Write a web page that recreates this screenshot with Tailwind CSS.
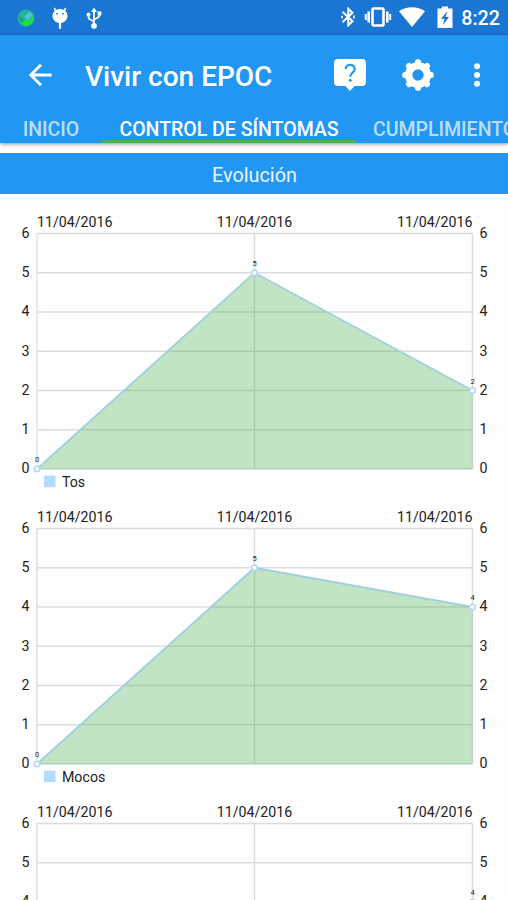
<!DOCTYPE html>
<html lang="es">
<head>
  <meta charset="UTF-8">
  <title>Vivir con EPOC | Control de síntomas</title>
  <script src="https://cdn.jsdelivr.net/npm/@tailwindcss/browser@4"></script>
</head>
<body class="w-[508px] h-[900px] overflow-hidden bg-[#fefefe] font-['Roboto',sans-serif]">
  <!-- Status bar -->
  <div class="h-[35px] bg-[#1976d2] flex items-center justify-between pl-[17px] pr-2 text-white">
    <div class="flex items-center">
      <svg class="w-[18px] h-[18px]" viewBox="0 0 18 18">
        <circle cx="9" cy="9" r="8.5" fill="#27b39a"/>
        <path d="M2 4 7 8l5-5 4 3-5 5z" fill="#4dc4d8"/>
        <path d="M4 14l4-3 4 1 4-5c2 5-2 10-7 10-2 0-4-1-5-3z" fill="#17e43a"/>
        <path d="M1 7l4 2 3 3-4 1z" fill="#16a67c"/>
      </svg>
      <svg class="w-[18px] h-[22px] ml-4" viewBox="0 0 18 22" fill="#fff">
        <path d="M3.2 1 5 4M14.8 1 13 4" stroke="#fff" stroke-width="1.5"/>
        <path d="M9 2c4.300 0 7.500 3 7.500 6.800 0 4-3 7.200-7.500 7.200s-7.500-3.200-7.500-7.200c0-3.800 3.200-6.800 7.500-6.800z"/>
        <rect x="7.900" y="15" width="2.200" height="7" rx="1"/>
        <circle cx="6" cy="6.800" r=".9" fill="#1976d2"/>
        <circle cx="12" cy="6.800" r=".9" fill="#1976d2"/>
      </svg>
      <svg class="w-[16px] h-[22px] ml-[17px]" viewBox="0 0 16 22" fill="none" stroke="#fff" stroke-width="1.800">
        <path d="M8 18V4M8 15.500C8 12.500 2.500 14 2.500 10V8M8 13.500c0-3 5.500-1.500 5.500-5.500V6"/>
        <path d="M8 .5 5 5h6z" fill="#fff" stroke="none"/>
        <circle cx="8" cy="18.800" r="2.900" fill="#fff" stroke="none"/>
        <circle cx="2.500" cy="7.500" r="2" fill="#fff" stroke="none"/>
        <rect x="11.600" y="4.500" width="3.800" height="3.800" fill="#fff" stroke="none"/>
      </svg>
    </div>
    <div class="flex items-center">
      <svg class="w-[14px] h-[20px]" viewBox="0 0 14 20" fill="none" stroke="#fff" stroke-width="2">
        <path d="M1.500 4.800 11.500 14.200 7.300 18.200V1.800l4.200 4L1.500 15.200"/>
        <path d="M1 8.800v2.400M13 8.500v3" stroke-width="1.600"/>
      </svg>
      <svg class="w-[28px] h-[20px] ml-[9px]" viewBox="0 0 28 20" fill="none" stroke="#fff">
        <rect x="8.500" y="1.500" width="11" height="17" rx="1" stroke-width="2.600"/>
        <path d="M4.700 4.500v11M23.300 4.500v11" stroke-width="2.600"/>
        <path d="M1.800 7v6M26.200 7v6" stroke-width="2"/>
      </svg>
      <svg class="w-[26px] h-[20px] ml-[7px]" viewBox="0 0 26 20" fill="#fff">
        <path d="M0 4.200C7.500-1 18.500-1 26 4.200L13 20z"/>
      </svg>
      <svg class="w-[16px] h-[22px] ml-[12px]" viewBox="0 0 16 22">
        <path d="M5 .5h6v2h4.500V22H.5V2.500H5z" fill="#fff"/>
        <path d="M10.500 5 4 12.700h3.500L6 19l6-8H8.500z" fill="#1976d2"/>
      </svg>
      <span class="ml-[8px] text-[19.700px] leading-none font-medium pt-[3px]">8:22</span>
    </div>
  </div>

  <!-- App bar and tabs -->
  <header class="relative z-10 h-[107.500px] bg-[#2196f3] text-white shadow-[0_1px_4px_rgba(0,0,0,0.45)]">
    <div class="h-[80px] flex items-center pl-[28px]">
      <svg class="w-[24px] h-[24px]" viewBox="0 0 24 24" fill="none" stroke="#fff" stroke-width="2.800">
        <path d="M23.500 12H3M13 1.800 2.800 12 13 22.200"/>
      </svg>
      <h1 class="ml-[33px] w-[248px] text-[28px] leading-none font-medium whitespace-nowrap pt-[4px]">Vivir con EPOC</h1>
      <svg class="w-[34px] h-[34px]" viewBox="0 0 34 34">
        <path d="M5 1h24c2.500 0 4 1.500 4 4v19c0 2.500-1.500 4-4 4h-7.500L17 33l-4.500-5H5c-2.500 0-4-1.500-4-4V5c0-2.500 1.500-4 4-4z" fill="#fff"/>
        <path d="M12.700 11c0-5.500 9-5.500 9 0 0 3.800-4.500 4-4.500 7.800" fill="none" stroke="#2196f3" stroke-width="2.200"/>
        <circle cx="17.200" cy="22.200" r="1.500" fill="#2196f3"/>
      </svg>
      <svg class="w-[34px] h-[34px] ml-[34px]" viewBox="0 0 34 34">
        <g fill="#fff">
          <circle cx="17" cy="17" r="13"/>
          <rect x="14" y="1.300" width="6" height="31.400" rx="2.500"/>
          <rect x="14" y="1.300" width="6" height="31.400" rx="2.500" transform="rotate(45 17 17)"/>
          <rect x="14" y="1.300" width="6" height="31.400" rx="2.500" transform="rotate(90 17 17)"/>
          <rect x="14" y="1.300" width="6" height="31.400" rx="2.500" transform="rotate(135 17 17)"/>
        </g>
        <circle cx="17" cy="17" r="5.700" fill="#2196f3"/>
      </svg>
      <svg class="w-[8px] h-[26px] ml-[38px]" viewBox="0 0 8 26" fill="#fff">
        <circle cx="4" cy="4.200" r="3"/>
        <circle cx="4" cy="13" r="3"/>
        <circle cx="4" cy="21.800" r="3"/>
      </svg>
    </div>
    <nav class="h-[27.500px] flex text-[19.500px] leading-[29px] font-medium whitespace-nowrap overflow-hidden">
      <a class="w-[102px] shrink-0 text-center text-white/70">INICIO</a>
      <a class="w-[254px] h-[27.500px] shrink-0 text-center border-b-3 border-[#4caf50]">CONTROL DE SÍNTOMAS</a>
      <a class="pl-[17px] shrink-0 text-white/70">CUMPLIMIENTO</a>
    </nav>
  </header>

  <h2 class="mt-[10.500px] h-[40.500px] bg-[#2196f3] text-center text-[19.800px] leading-[45px] text-white/90 pl-px">Evolución</h2>

  <main id="charts" class="h-[706.500px] overflow-hidden"></main>

  <script>
    const charts = [
      { name: 'Tos', values: [0, 5, 2], axis: '#d9e6fb' },
      { name: 'Mocos', values: [0, 5, 4], axis: '#dcdce0' },
      { name: 'Flemas', values: [0, 3, 4], axis: '#dcdce0' }
    ];
    const date = '11/04/2016';
    const xs = [37, 254.5, 472.5];
    const gridTop = 39.5, step = 39.25;
    const yOf = v => gridTop + (6 - v) * step;

    function drawChart(c) {
      let grid = '', points = '';
      for (let v = 0; v <= 6; v++) {
        const y = yOf(v);
        grid += `<path d="M37 ${y}H472.5" stroke="#dcdcdc" stroke-width="1.5"/>
          <text x="29.5" y="${y + 4.5}" text-anchor="end">${v}</text>
          <text x="479.5" y="${y + 4.5}">${v}</text>`;
      }
      const line = c.values.map((v, i) => `${xs[i]},${yOf(v)}`).join(' ');
      c.values.forEach((v, i) => {
        points += `<circle cx="${xs[i]}" cy="${yOf(v)}" r="2.8" fill="#fff" stroke="#b5d6fa" stroke-width="1.5"/>
          <text x="${xs[i]}" y="${yOf(v) - 6.5}" font-size="7.5" text-anchor="middle">${v}</text>`;
      });
      return `<svg class="block w-[508px] h-[295.300px]" viewBox="0 0 508 295.3" font-size="14.2" fill="#222">
        ${grid}
        <path d="M254.5 ${gridTop}V${yOf(0)}M472.5 ${gridTop}V${yOf(0)}" stroke="#dcdcdc" stroke-width="1.5"/>
        <path d="M37 ${gridTop}V${yOf(0)}" stroke="${c.axis}" stroke-width="1.5"/>
        <text x="37" y="32.7">${date}</text>
        <text x="254.5" y="32.7" text-anchor="middle">${date}</text>
        <text x="472.5" y="32.7" text-anchor="end">${date}</text>
        <path d="M37 ${yOf(0)}H472.5" stroke="#cfe9e4" stroke-width="1.5"/>
        <polygon points="37,${yOf(0)} ${line} 472.5,${yOf(0)}" fill="#4caf50" fill-opacity="0.33"/>
        <polyline points="${line}" fill="none" stroke="#9fd0e0" stroke-width="1.8"/>
        ${points}
        <rect x="44" y="281.7" width="11.5" height="11.5" fill="#b3dbff"/>
        <text x="62" y="292.6">${c.name}</text>
      </svg>`;
    }

    document.getElementById('charts').innerHTML = charts.map(drawChart).join('');
  </script>
</body>
</html>
